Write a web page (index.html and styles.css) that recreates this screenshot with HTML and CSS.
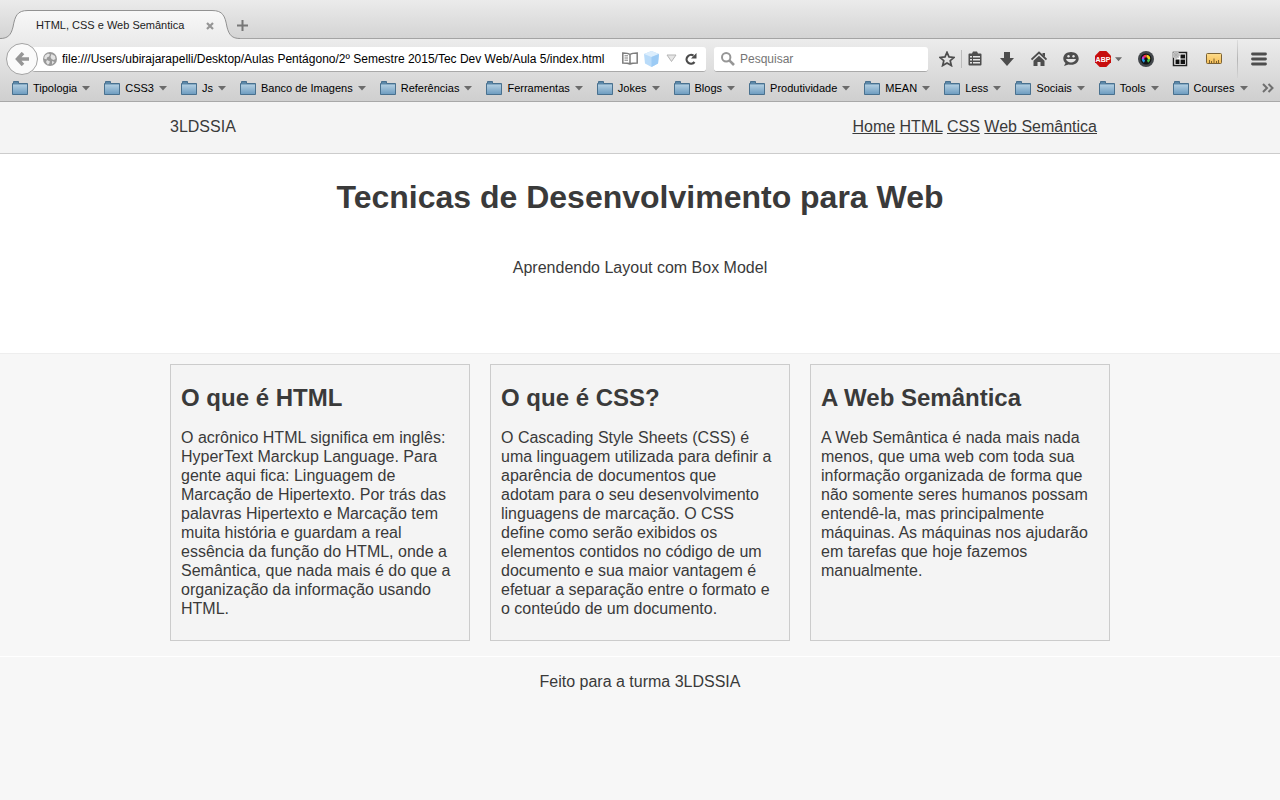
FILE: index.html
```html
<!DOCTYPE html>
<html lang="pt-BR">
<head>
<meta charset="utf-8">
<title>HTML, CSS e Web Semântica</title>
<link rel="stylesheet" href="styles.css">
</head>
<body>
<svg class="defs" width="0" height="0" aria-hidden="true">
  <defs>
    <linearGradient id="folderFill" x1="0" y1="0" x2="0" y2="1"><stop offset="0" stop-color="#b3cfe2"/><stop offset="1" stop-color="#6f9dc0"/></linearGradient>
    <linearGradient id="tabFill" x1="0" y1="0" x2="0" y2="1"><stop offset="0" stop-color="#f8f8f8"/><stop offset="1" stop-color="#ececec"/></linearGradient>
    <linearGradient id="rulerFill" x1="0" y1="0" x2="0" y2="1"><stop offset="0" stop-color="#fddc8c"/><stop offset="1" stop-color="#f5bd55"/></linearGradient>
    <symbol id="folder" viewBox="0 0 16 14"><path d="M1.5 2.5V.5h5v2h9v11H.5v-11z" fill="#5b87a8" stroke="#49718f"/><path d="M1 3.5h14V13H1z" fill="url(#folderFill)"/></symbol>
    <symbol id="caret" viewBox="0 0 8 5"><path d="M0 0h8L4 4.500z" fill="#6b6b6b"/></symbol>
  </defs>
</svg>

<div class="browser">
  <div class="tabs">
    <div class="tab">
      <svg class="tab-shape" viewBox="0 0 240 29"><path d="M0 28.500C8 28.500 11 25 13 17C15 6 17 .5 28 .5H212C223 .5 225 6 227 17C229 25 232 28.500 240 28.500V29H0z" fill="url(#tabFill)"/><path d="M0 28.500C8 28.500 11 25 13 17C15 6 17 .5 28 .5H212C223 .5 225 6 227 17C229 25 232 28.500 240 28.500" fill="none" stroke="#929292"/></svg>
      <span class="tab-title">HTML, CSS e Web Semântica</span>
      <button class="plain tab-close" aria-label="Fechar aba"><svg width="8" height="8" viewBox="0 0 8 8"><path d="M1 1l6 6M7 1L1 7" stroke="#959595" stroke-width="2.200"/></svg></button>
    </div>
    <button class="plain tab-new" aria-label="Nova aba"><svg width="11" height="11" viewBox="0 0 11 11"><path d="M5.500 0v11M0 5.500h11" stroke="#777" stroke-width="2"/></svg></button>
  </div>

  <div class="toolbar">
    <button class="back" aria-label="Voltar"><svg width="14" height="14" viewBox="0 0 14 14"><path d="M8 1L2.500 7L8 13M3 7h11" fill="none" stroke="#969696" stroke-width="3.500"/></svg></button>
    <div class="field location">
      <svg width="14" height="14" viewBox="0 0 14 14"><circle cx="7" cy="7" r="7" fill="#999"/><path d="M2 3.500L5 1.500l2 1-1 2-2 1-.5 2L1 6.500zM8.500 2l3.500 2 .5 3-2 1-2-1-1-2zM4 8l3 1.500-1 2.500-1.500.5L3 10zM9 9l2.500 1L9 12.500z" fill="#e3e3e3"/></svg>
      <input class="url" aria-label="Endereço" value="file:///Users/ubirajarapelli/Desktop/Aulas Pentágono/2º Semestre 2015/Tec Dev Web/Aula 5/index.html">
      <svg width="16" height="13" viewBox="0 0 16 13"><path d="M8 2.500C6 1 3 1 .8 1V11C3 11 6 11 8 12C10 11 13 11 15.200 11V1C13 1 10 1 8 2.500zM8 2.500V12" fill="none" stroke="#7d7d7d" stroke-width="1.500"/><path d="M2.500 3.800h3.500M2.500 6h3.500M2.500 8.200h3.500" stroke="#7d7d7d"/></svg>
      <svg class="cube" width="15" height="16" viewBox="0 0 15 16"><path d="M7.500 0L15 3 14 12.500 7.500 16 1 12.500 0 3z" fill="#b9dbf9"/><path d="M0 3L7.500 0 15 3 7.500 6z" fill="#dceefd"/><path d="M7.500 6L15 3 14 12.500 7.500 16z" fill="#9ccbf5"/></svg>
      <svg class="drop" width="11" height="9" viewBox="0 0 11 9"><path d="M1 1h9L5.500 7.500z" fill="#e6e6e6" stroke="#b5b5b5"/></svg>
      <svg width="12" height="12" viewBox="0 0 12 12"><path d="M9.500 9A4.400 4.400 0 1 1 8.500 2.700" fill="none" stroke="#4b4b4b" stroke-width="2.200"/><path d="M11.500 0v5.500H6z" fill="#4b4b4b"/></svg>
    </div>
    <div class="field search">
      <svg width="14" height="14" viewBox="0 0 14 14"><circle cx="5.200" cy="5.200" r="4.200" fill="none" stroke="#969696" stroke-width="2"/><path d="M8.300 8.300L13 13" stroke="#969696" stroke-width="2.600"/></svg>
      <input class="query" aria-label="Pesquisar" placeholder="Pesquisar">
    </div>
    <div class="tools">
      <button class="plain star" aria-label="Favoritar"><svg width="16" height="16" viewBox="0 0 16 16"><path d="M8 1.300l2 4.600 5 .5-3.800 3.300 1.200 4.900L8 12l-4.400 2.600 1.200-4.900L1 6.400l5-.5z" fill="none" stroke="#4d4d4d" stroke-width="1.700"/></svg></button>
      <span class="rule"></span>
      <button class="plain" aria-label="Lista"><svg width="16" height="16" viewBox="0 0 16 16"><path d="M5 2.500L6 .5h4l1 2h2.500a1 1 0 0 1 1 1v10a1 1 0 0 1-1 1h-11a1 1 0 0 1-1-1v-10a1 1 0 0 1 1-1z" fill="#4d4d4d"/><path d="M3 5h2v1.500H3zM6 5h7v1.500H6zM3 8h2v1.500H3zM6 8h7v1.500H6zM3 11h2v1.500H3zM6 11h7v1.500H6z" fill="#e5e5e5"/></svg></button>
      <button class="plain" aria-label="Downloads"><svg width="16" height="16" viewBox="0 0 16 16"><path d="M5 1h6v6h4L8 15 1 7h4z" fill="#4d4d4d"/></svg></button>
      <button class="plain" aria-label="Início"><svg width="16" height="16" viewBox="0 0 16 16"><path d="M.5 8.500L8 1.500l7.500 7" fill="none" stroke="#4d4d4d" stroke-width="1.800"/><path d="M11.500 2H14v4l-2.500-2zM8 4.800l5.500 5V15H9.500v-4h-3v4h-4V9.800z" fill="#4d4d4d"/></svg></button>
      <button class="plain" aria-label="Conversar"><svg width="16" height="16" viewBox="0 0 16 16"><path d="M8 1C3.500 1 .3 3.800 .3 7.500c0 2 1 3.500 2.200 4.500L1 15l4.500-1.500c6 1.500 10.200-2 10.200-6C15.700 3.800 12.500 1 8 1z" fill="#4d4d4d"/><circle cx="5.500" cy="5.300" r="1.200" fill="#e5e5e5"/><circle cx="10.500" cy="5.300" r="1.200" fill="#e5e5e5"/><path d="M3 8h10c-1 4.600-9 4.600-10 0z" fill="#e5e5e5"/></svg></button>
      <button class="plain abp" aria-label="Adblock Plus"><svg width="16" height="16" viewBox="0 0 16 16"><path d="M4.700 0h6.600L16 4.700v6.600L11.300 16H4.700L0 11.300V4.700z" fill="#c70d0d"/><text x="8" y="11" text-anchor="middle" class="abp-text">ABP</text></svg><svg width="7" height="5"><use href="#caret"/></svg></button>
      <button class="plain" aria-label="Seletor de cores"><svg width="16" height="16" viewBox="0 0 16 16"><circle cx="8" cy="8" r="8" fill="#43474b"/><circle cx="8" cy="8" r="5.500" fill="#101214"/><g fill="none" stroke-width="2.500"><path d="M5 8a3 3 0 0 1 1-2.200" stroke="#c33bd8"/><path d="M6 5.800a3 3 0 0 1 2.500-.8" stroke="#ff334b"/><path d="M8.500 5A3 3 0 0 1 11 8" stroke="#f4d322"/><path d="M11 8a3 3 0 0 1-1.500 2.600" stroke="#49c44b"/><path d="M5 8a3 3 0 0 0 1.500 2.600" stroke="#2799e8"/></g></svg></button>
      <button class="plain spaced" aria-label="Grade"><svg width="16" height="16" viewBox="0 0 16 16"><path d="M1.500 1.500h13v13h-13z" fill="#fff" stroke="#222" stroke-width="1.500"/><path d="M8.500 3.500H13v4H8.500zM3.500 8.500h4V13h-4zM8.500 8.500H13V13H8.500z" fill="#111"/><circle cx="4" cy="4" r="3.500" fill="#c8c8c8"/><path d="M4 0v8M0 4h8M1.500 1.500l5 5M6.500 1.500l-5 5" stroke="#b0b0b0"/></svg></button>
      <button class="plain spaced" aria-label="Régua"><svg width="16" height="16" viewBox="0 0 16 16"><rect x=".5" y="2.500" width="15" height="10" rx="1" fill="url(#rulerFill)" stroke="#7b6235"/><path d="M3.500 12V9M5.500 12v-2M8 12V7.500M10.500 12v-2M12.500 12V9" stroke="#80622c"/></svg></button>
      <span class="rule tall"></span>
      <button class="plain menu" aria-label="Menu"><svg width="16" height="14" viewBox="0 0 16 14"><path d="M1.500 2h13M1.500 7h13M1.500 12h13" stroke="#4d4d4d" stroke-width="2.800" stroke-linecap="round"/></svg></button>
    </div>
  </div>

  <div class="bookmarks">
    <button class="plain mark"><svg width="16" height="14"><use href="#folder"/></svg>Tipologia<svg class="arrow"><use href="#caret"/></svg></button>
    <button class="plain mark"><svg width="16" height="14"><use href="#folder"/></svg>CSS3<svg class="arrow"><use href="#caret"/></svg></button>
    <button class="plain mark"><svg width="16" height="14"><use href="#folder"/></svg>Js<svg class="arrow"><use href="#caret"/></svg></button>
    <button class="plain mark"><svg width="16" height="14"><use href="#folder"/></svg>Banco de Imagens<svg class="arrow"><use href="#caret"/></svg></button>
    <button class="plain mark"><svg width="16" height="14"><use href="#folder"/></svg>Referências<svg class="arrow"><use href="#caret"/></svg></button>
    <button class="plain mark"><svg width="16" height="14"><use href="#folder"/></svg>Ferramentas<svg class="arrow"><use href="#caret"/></svg></button>
    <button class="plain mark"><svg width="16" height="14"><use href="#folder"/></svg>Jokes<svg class="arrow"><use href="#caret"/></svg></button>
    <button class="plain mark"><svg width="16" height="14"><use href="#folder"/></svg>Blogs<svg class="arrow"><use href="#caret"/></svg></button>
    <button class="plain mark"><svg width="16" height="14"><use href="#folder"/></svg>Produtividade<svg class="arrow"><use href="#caret"/></svg></button>
    <button class="plain mark"><svg width="16" height="14"><use href="#folder"/></svg>MEAN<svg class="arrow"><use href="#caret"/></svg></button>
    <button class="plain mark"><svg width="16" height="14"><use href="#folder"/></svg>Less<svg class="arrow"><use href="#caret"/></svg></button>
    <button class="plain mark"><svg width="16" height="14"><use href="#folder"/></svg>Sociais<svg class="arrow"><use href="#caret"/></svg></button>
    <button class="plain mark"><svg width="16" height="14"><use href="#folder"/></svg>Tools<svg class="arrow"><use href="#caret"/></svg></button>
    <button class="plain mark"><svg width="16" height="14"><use href="#folder"/></svg>Courses<svg class="arrow"><use href="#caret"/></svg></button>
    <button class="plain more" aria-label="Mais favoritos"><svg width="12" height="10" viewBox="0 0 12 10"><path d="M1 1l4 4-4 4M6.500 1l4 4-4 4" fill="none" stroke="#707070" stroke-width="2"/></svg></button>
  </div>
</div>

<header class="site-header">
  <div class="wrap header-row">
    <span>3LDSSIA</span>
    <nav><a href="#inicio">Home</a> <a href="#html">HTML</a> <a href="#css">CSS</a> <a href="#semantica">Web Semântica</a></nav>
  </div>
</header>
<section class="hero" id="inicio">
  <h1>Tecnicas de Desenvolvimento para Web</h1>
  <p>Aprendendo Layout com Box Model</p>
</section>
<main class="content">
  <div class="wrap cards">
    <article class="card" id="html">
      <h2>O que é HTML</h2>
      <p>O acrônico HTML significa em inglês: HyperText Marckup Language. Para gente aqui fica: Linguagem de Marcação de Hipertexto. Por trás das palavras Hipertexto e Marcação tem muita história e guardam a real essência da função do HTML, onde a Semântica, que nada mais é do que a organização da informação usando HTML.</p>
    </article>
    <article class="card" id="css">
      <h2>O que é CSS?</h2>
      <p>O Cascading Style Sheets (CSS) é uma linguagem utilizada para definir a aparência de documentos que adotam para o seu desenvolvimento linguagens de marcação. O CSS define como serão exibidos os elementos contidos no código de um documento e sua maior vantagem é efetuar a separação entre o formato e o conteúdo de um documento.</p>
    </article>
    <article class="card" id="semantica">
      <h2>A Web Semântica</h2>
      <p>A Web Semântica é nada mais nada menos, que uma web com toda sua informação organizada de forma que não somente seres humanos possam entendê-la, mas principalmente máquinas. As máquinas nos ajudarão em tarefas que hoje fazemos manualmente.</p>
    </article>
  </div>
</main>
<footer class="footer">Feito para a turma 3LDSSIA</footer>
</body>
</html>
```
FILE: styles.css
```css
* { box-sizing: border-box; }
body {
  margin: 0;
  background: #f7f7f7;
  color: #3a3a3a;
  font: 16px/19px "Liberation Sans", Arial, sans-serif;
}
svg { display: block; flex: none; }
.defs { position: absolute; }

.browser {
  background: linear-gradient(#ebebeb, #d4d4d4 38px, #ececec 39px, #cfcfcf 101px);
  border-bottom: 1px solid #a8a8a8;
  color: #000;
  font-size: 11px;
}
.plain {
  display: flex;
  align-items: center;
  justify-content: center;
  padding: 0;
  border: 0;
  background: none;
  color: inherit;
  font: inherit;
}
.tabs {
  display: flex;
  height: 39px;
  padding-top: 10px;
  border-bottom: 1px solid #a4a4a4;
}
.tab {
  position: relative;
  display: flex;
  align-items: center;
  width: 240px;
  height: 29px;
  padding: 2px 26px 0 36px;
}
.tab-shape { position: absolute; inset: 0; width: 240px; height: 29px; }
.tab-title { position: relative; flex: 1; color: #222; white-space: nowrap; }
.tab-close { position: relative; }
.tab-new { width: 11px; margin: 3px 0 0 -3px; }

.toolbar {
  display: flex;
  align-items: center;
  height: 40px;
  padding-left: 6px;
}
.back {
  z-index: 1;
  display: flex;
  align-items: center;
  justify-content: center;
  flex: none;
  width: 32px;
  height: 32px;
  padding: 0;
  border: 1px solid #a3a3a3;
  border-radius: 50%;
  background: #fafafa;
}
.field {
  display: flex;
  align-items: center;
  height: 25px;
  background: #fff;
  border-bottom: 1px solid #a9a9a9;
  border-radius: 3px;
}
.location { flex: 1; margin-left: -6px; padding: 0 9px 0 11px; }
.search { width: 214px; margin-left: 8px; padding: 0 7px; }
input {
  min-width: 0;
  padding: 0;
  border: 0;
  outline: 0;
  background: none;
  color: #000;
  font: 12px/16px "Liberation Sans", Arial, sans-serif;
}
.url { flex: 1; margin: 0 4px 0 5px; }
.query { flex: 1; margin-left: 5px; }
.query::placeholder { color: #757575; opacity: 1; }
.cube { margin-left: 6px; }
.drop { margin: 0 8px 0 7px; }
.tools {
  display: flex;
  align-items: center;
  align-self: stretch;
  gap: 16px;
  padding: 0 13px 0 11px;
}
.spaced { margin-left: 2px; }
.rule { width: 1px; height: 18px; margin: 0 -11px 0 -10px; background: #bcbcbc; }
.rule.tall {
  height: 38px;
  margin: 0 -3px 0 -1px;
  background: linear-gradient(#dedede, #b4b4b4, #d4d4d4);
}
.abp { gap: 4px; }
.abp-text { fill: #fff; font: bold 7px "Liberation Sans", Arial, sans-serif; }

.bookmarks {
  display: flex;
  align-items: center;
  height: 22px;
  padding: 0 6px 4px 12px;
  gap: 14px;
}
.mark { gap: 5px; white-space: nowrap; }
.arrow { width: 8px; height: 5px; }
.more { margin-left: auto; }

.wrap { width: 940px; max-width: 100%; margin: 0 auto; }
.site-header { padding: 15px 0 17px; background: #f4f4f4; border-bottom: 1px solid #ccc; }
.header-row { display: flex; justify-content: space-between; padding-right: 13px; }
.header-row a { color: inherit; }
.hero {
  padding: 24px 0 76px;
  background: #fff;
  border-bottom: 1px solid #eee;
  text-align: center;
}
h1 { margin: 0 0 42px; font-size: 32px; line-height: 38px; }
p { margin: 0; }
.content { padding: 10px 0 15px; border-bottom: 1px solid #fff; }
.cards { display: grid; grid-template-columns: repeat(3, 1fr); gap: 20px; }
.card { padding: 18px 16px 22px 10px; background: #f4f4f4; border: 1px solid #ccc; }
h2 { margin: 0 0 16px; font-size: 24px; line-height: 29px; }
.footer { padding: 15px 0; text-align: center; }
```
